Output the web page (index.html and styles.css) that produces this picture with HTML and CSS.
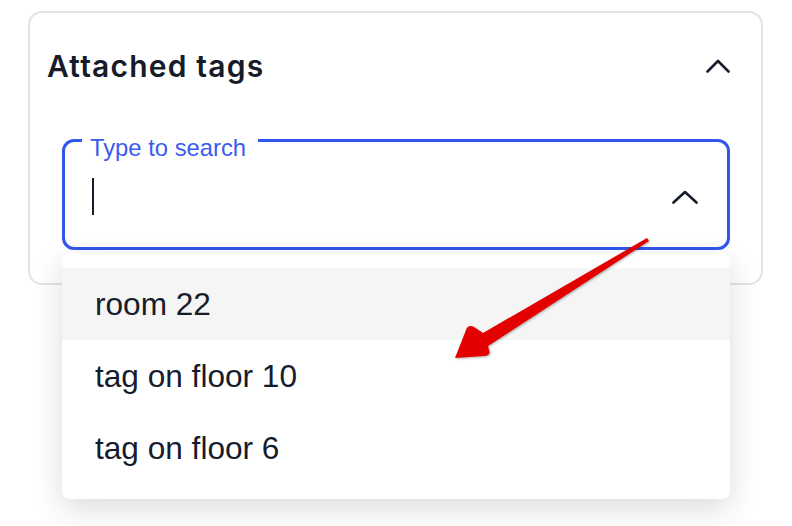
FILE: index.html
```html
<!DOCTYPE html>
<html lang="en">
<head>
  <meta charset="UTF-8">
  <title>Attached tags</title>
  <link rel="stylesheet" href="styles.css">
</head>
<body>

  <div class="tags-card">
    <div class="tags-header">
      <h2>Attached tags</h2>
      <svg class="chevron" width="24" height="14" viewBox="0 0 24 14">
        <polyline points="1.5,12.5 12,2 22.5,12.5" />
      </svg>
    </div>

    <div class="search-field">
      <span class="search-label">Type to search</span>
      <span class="caret"></span>
      <svg class="chevron" width="26" height="14" viewBox="0 0 26 14">
        <polyline points="1.5,12.5 13,2 24.5,12.5" />
      </svg>
    </div>
  </div>

  <!-- dropdown menu opened under the search field -->
  <ul class="tag-options">
    <li class="active">room 22</li>
    <li>tag on floor 10</li>
    <li>tag on floor 6</li>
  </ul>

  <svg class="pointer-arrow" width="792" height="526" viewBox="0 0 792 526">
    <path d="M647,238 L483,333 L474,327 Q468,324 466,330 L455,358 L485,356 Q491,355 489,350 L488,346 L649,241 Z" />
  </svg>

</body>
</html>
```

FILE: styles.css
```css
body {
  margin: 0;
  background-color: #ffffff;
  font-family: 'Liberation Sans', Arial, sans-serif;
  color: #171c2b;
}

.tags-card {
  box-sizing: border-box;
  width: 735px;
  height: 274px;
  margin: 11px 0 0 28px;
  padding: 25px 31px 0 17px;
  border: 2px solid #e4e4e6;
  border-radius: 14px;
}

.tags-header {
  display: flex;
  align-items: center;
  justify-content: space-between;
  height: 56px;
}

.tags-header h2 {
  margin: 0;
  font-family: 'Inter', sans-serif;
  font-weight: 600;
  font-size: 30px;
  letter-spacing: 1.2px;
  color: #161b2a;
}

.chevron polyline {
  fill: none;
  stroke: #171c2b;
  stroke-width: 2.6;
  stroke-linecap: round;
  stroke-linejoin: round;
}

.search-field {
  position: relative;
  display: flex;
  align-items: center;
  justify-content: space-between;
  box-sizing: border-box;
  height: 111px;
  margin: 45px 0 0 15px;
  padding: 4px 29px 0 27px;
  border: 3px solid #3056ec;
  border-radius: 12px;
}

.search-label {
  position: absolute;
  top: -6px;
  left: 17px;
  padding: 0 12px 0 8px;
  background: #ffffff;
  font-size: 23.8px;
  line-height: 1;
  color: #3a5cef;
}

.caret {
  width: 2px;
  height: 37px;
  background: #171c2b;
}

.tag-options {
  position: absolute;
  top: 253px;
  left: 62px;
  width: 668px;
  z-index: 2;
  margin: 0;
  padding: 15px 0;
  list-style: none;
  background: #ffffff;
  border-radius: 8px;
  box-shadow: 0 10px 30px rgba(30, 35, 60, 0.16);
}

.tag-options li {
  height: 72px;
  line-height: 72px;
  padding-left: 33px;
  font-size: 31.6px;
  color: #171c2b;
}

.tag-options li.active {
  background: #f5f5f6;
}

.pointer-arrow {
  position: absolute;
  top: 0;
  left: 0;
  z-index: 3;
  pointer-events: none;
}

.pointer-arrow path {
  fill: #e30000;
  filter: drop-shadow(1px 1px 1px rgba(0, 0, 0, 0.3));
}
```
